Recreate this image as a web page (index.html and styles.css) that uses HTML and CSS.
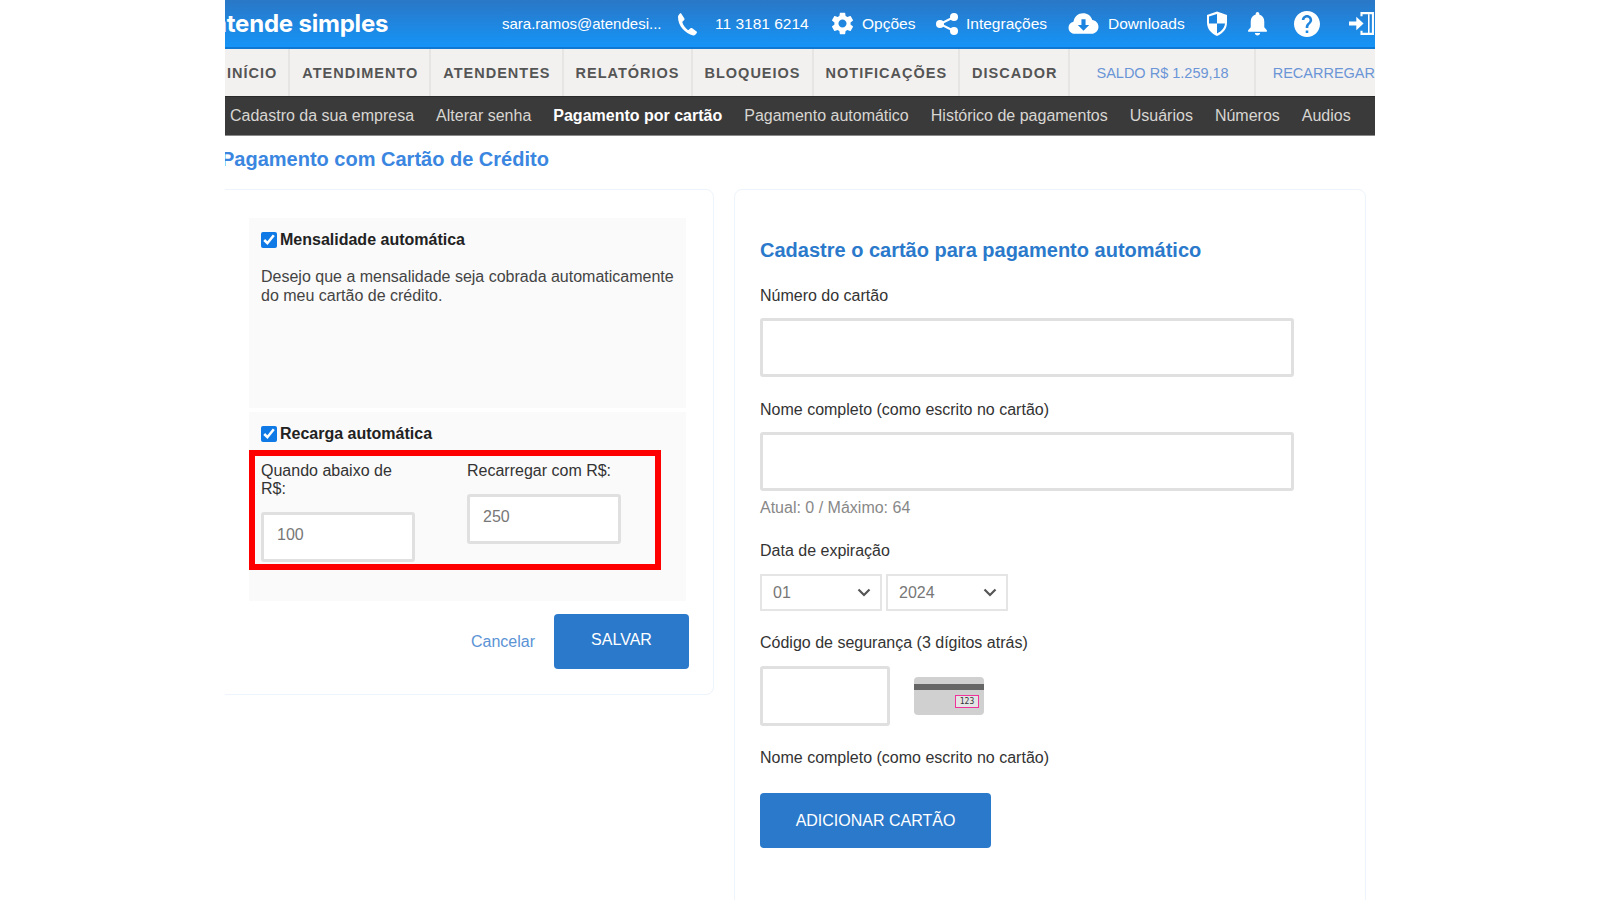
FILE: index.html
```html
<!DOCTYPE html>
<html lang="pt-BR">
<head>
	<meta charset="utf-8">
	<title>Pagamento com Cartão de Crédito</title>
	<link rel="stylesheet" href="styles.css">
</head>
<body>
<div class="page">

	<!-- top bar -->
	<header class="topbar">
		<div class="logo">atende simples</div>
		<div class="email">sara.ramos@atendesi...</div>
		<svg class="ico ico-phone" viewBox="0 0 24 24"><path d="M6.2 1.6 9.4 6.6c.3.5.2 1-.2 1.4L7.6 9.6c-.3.3-.3.7-.2 1 1 3 2.800 5.500 5.400 7.300.4.200.7.200 1-.1l1.700-1.600c.4-.4 1-.4 1.400-.1l4.700 3.500c.4.300.5.900.2 1.300l-1.300 1.600c-.6.700-1.400 1-2.300.9C10.200 21.800 2.800 13.700 3 4.800c0-.8.300-1.500.9-2l1-1.300c.4-.4 1-.4 1.300.1z"/></svg>
		<div class="phone">11 3181 6214</div>
		<svg class="ico ico-gear" viewBox="0 0 24 24"><path d="M19.14 12.94c.04-.3.06-.61.06-.94 0-.32-.02-.64-.07-.94l2.03-1.58c.18-.14.23-.41.12-.61l-1.92-3.32c-.12-.22-.37-.29-.59-.22l-2.39.96c-.5-.38-1.03-.7-1.62-.94l-.36-2.54c-.04-.24-.24-.41-.48-.41h-3.84c-.24 0-.43.17-.47.41l-.36 2.54c-.59.24-1.13.57-1.62.94l-2.39-.96c-.22-.08-.47 0-.59.22L2.74 8.87c-.12.21-.08.47.12.61l2.03 1.58c-.05.3-.09.63-.09.94s.02.64.07.94l-2.03 1.58c-.18.14-.23.41-.12.61l1.92 3.32c.12.22.37.29.59.22l2.39-.96c.5.38 1.03.7 1.62.94l.36 2.54c.05.24.24.41.48.41h3.84c.24 0 .44-.17.47-.41l.36-2.54c.59-.24 1.13-.56 1.62-.94l2.39.96c.22.08.47 0 .59-.22l1.92-3.32c.12-.22.07-.47-.12-.61l-2.01-1.58zM12 15.6c-1.98 0-3.6-1.62-3.6-3.6s1.62-3.6 3.6-3.6 3.6 1.62 3.6 3.6-1.62 3.6-3.6 3.6z"/></svg>
		<div class="top-link link-opcoes">Opções</div>
		<svg class="ico ico-share" viewBox="0 0 24 24"><path d="M19 5 5 12l14 7" fill="none" stroke="#fff" stroke-width="2"/><circle cx="19" cy="5" r="4"/><circle cx="5" cy="12" r="4"/><circle cx="19" cy="19" r="4"/></svg>
		<div class="top-link link-integ">Integrações</div>
		<svg class="ico ico-cloud" viewBox="0 0 30 22"><path d="M7 21C3 21 .5 18.200.5 15c0-3 2-5.200 4.800-5.800C6 4.200 10 1 14.500 1c4.500 0 7.800 2.600 9 6.600 3.300.3 6 3 6 6.600 0 3.800-3 6.800-6.800 6.800z"/><path d="M13 7h4v5.500h3.500L15 18l-5.500-5.500H13z" fill="#1b84e0"/></svg>
		<div class="top-link link-down">Downloads</div>
		<svg class="ico ico-shield" viewBox="0 0 22 26"><path d="M11 1 1 4.500V12c0 6.300 4.200 11 10 13.500C16.800 23 21 18.300 21 12V4.500z"/><path d="M11 3.600V13H3V12V6zM11 13h8c-.4 4.400-3.500 7.800-8 10z" fill="#1b84e0"/></svg>
		<svg class="ico ico-bell" viewBox="0 0 20 24"><path d="M10 1c-1 0-1.700.8-1.700 1.700v.6C5.300 4.200 3.500 6.800 3.500 10v5.500L1 18.500V20h18v-1.500l-2.500-3V10c0-3.200-1.800-5.800-4.800-6.700v-.6C11.700 1.800 11 1 10 1zM7.500 21.200c0 1.300 1.100 2.300 2.500 2.300s2.500-1 2.500-2.300z"/></svg>
		<svg class="ico ico-help" viewBox="2 2 20 20"><path d="M12 2C6.480 2 2 6.480 2 12s4.480 10 10 10 10-4.480 10-10S17.520 2 12 2zm1 17h-2v-2h2v2zm2.070-7.750l-.9.92C13.450 12.900 13 13.500 13 15h-2v-.5c0-1.100.45-2.100 1.170-2.830l1.240-1.260c.37-.36.59-.86.59-1.410 0-1.100-.9-2-2-2s-2 .9-2 2H8c0-2.210 1.790-4 4-4s4 1.790 4 4c0 .88-.36 1.680-.93 2.250z"/></svg>
		<svg class="ico ico-exit" viewBox="0 0 26 24"><path d="M1 10h7V5.500l7 6.500-7 6.500V14H1z"/><path d="M13 5V2h11v20H13v-3" fill="none" stroke="#fff" stroke-width="2"/><path d="M20 3v19" stroke="#fff" stroke-width="1.500"/></svg>
	</header>

	<!-- main menu -->
	<nav class="menu">
		<a class="menu-item item-first">INÍCIO</a>
		<a class="menu-item">ATENDIMENTO</a>
		<a class="menu-item">ATENDENTES</a>
		<a class="menu-item">RELATÓRIOS</a>
		<a class="menu-item">BLOQUEIOS</a>
		<a class="menu-item">NOTIFICAÇÕES</a>
		<a class="menu-item">DISCADOR</a>
		<div class="saldo">SALDO R$ 1.259,18</div>
		<div class="recarregar">RECARREGAR</div>
	</nav>

	<!-- submenu -->
	<nav class="submenu">
		<a>Cadastro da sua empresa</a>
		<a>Alterar senha</a>
		<a class="current">Pagamento por cartão</a>
		<a>Pagamento automático</a>
		<a>Histórico de pagamentos</a>
		<a>Usuários</a>
		<a>Números</a>
		<a>Audios</a>
	</nav>

	<h1 class="page-title">Pagamento com Cartão de Crédito</h1>

	<div class="columns">

		<section class="card card-left">
			<div class="box box-month">
				<label class="check-row"><input type="checkbox" checked> Mensalidade automática</label>
				<p class="box-text">Desejo que a mensalidade seja cobrada automaticamente do meu cartão de crédito.</p>
			</div>
			<div class="box box-recharge">
				<label class="check-row"><input type="checkbox" checked> Recarga automática</label>
				<div class="recharge-fields">
					<div class="recharge-col">
						<label class="field-label">Quando abaixo de R$:</label>
						<input class="text-input small-input" type="text" value="100">
					</div>
					<div class="recharge-col">
						<label class="field-label">Recarregar com R$:</label>
						<input class="text-input small-input" type="text" value="250">
					</div>
				</div>
				<div class="highlight"></div>
			</div>
			<div class="actions">
				<a class="cancel">Cancelar</a>
				<button class="btn btn-save">SALVAR</button>
			</div>
		</section>

		<section class="card card-right">
			<h2 class="card-title">Cadastre o cartão para pagamento automático</h2>

			<label class="field-label label-number">Número do cartão</label>
			<input class="text-input wide-input" type="text">

			<label class="field-label label-name">Nome completo (como escrito no cartão)</label>
			<input class="text-input wide-input" type="text">
			<div class="hint">Atual: 0 / Máximo: 64</div>

			<label class="field-label label-date">Data de expiração</label>
			<div class="selects">
				<div class="select-wrap">
					<select><option>01</option></select>
					<svg class="chevron" viewBox="0 0 14 9"><path d="M1.500 1.500 7 7l5.500-5.500" fill="none" stroke="#555" stroke-width="2.200"/></svg>
				</div>
				<div class="select-wrap">
					<select><option>2024</option></select>
					<svg class="chevron" viewBox="0 0 14 9"><path d="M1.500 1.500 7 7l5.500-5.500" fill="none" stroke="#555" stroke-width="2.200"/></svg>
				</div>
			</div>

			<label class="field-label label-code">Código de segurança (3 dígitos atrás)</label>
			<div class="code-row">
				<input class="text-input code-input" type="text">
				<div class="cvv-card">
					<div class="cvv-stripe"></div>
					<div class="cvv-num">123</div>
				</div>
			</div>

			<label class="field-label label-name2">Nome completo (como escrito no cartão)</label>
			<button class="btn btn-add">ADICIONAR CARTÃO</button>
		</section>

	</div>
</div>
</body>
</html>
```

FILE: styles.css
```css
html, body {margin: 0; background: #fff;}

body {
	font-family: "Liberation Sans", Arial, sans-serif;
	font-size: 16px;
	color: #333;
}

.page {
	width: 1150px;
	height: 900px;
	margin: 0 auto;
	overflow: hidden;
}

/* top bar */
.topbar {
	height: 49px;
	box-sizing: border-box;
	display: flex;
	align-items: center;
	color: #fff;
	background: linear-gradient(#2a77c6, #1594f7);
	border-bottom: 2px solid #0f78d2;
	font-size: 15.5px;
}
.logo {
	font-family: "Inter", "Liberation Sans", sans-serif;
	font-size: 24px;
	font-weight: 700;
	margin-left: -12px;
	width: 289px;
	white-space: nowrap;
	letter-spacing: -0.2px;
}
.email {width: 173px; font-size: 15px; white-space: nowrap;}
.phone {width: 114px; white-space: nowrap;}
.top-link {white-space: nowrap;}
.ico {fill: #fff; flex: none; display: block;}
.ico-phone {width: 24px; height: 24px; margin-right: 16px;}
.ico-gear {width: 27px; height: 27px; margin-right: 6px;}
.link-opcoes {width: 73px;}
.ico-share {width: 24px; height: 24px; margin-right: 7px;}
.link-integ {width: 102px;}
.ico-cloud {width: 31px; height: 23px; margin-right: 9px;}
.link-down {width: 98px;}
.ico-shield {width: 22px; height: 27px; margin-right: 19px;}
.ico-bell {width: 21px; height: 25px; margin-right: 26px;}
.ico-help {width: 26px; height: 26px; margin-right: 28px;}
.ico-exit {width: 27px; height: 25px;}

/* main menu */
.menu {
	height: 47px;
	display: flex;
	align-items: center;
	background: #f2f1f0;
	font-size: 14.5px;
}
.menu-item {
	height: 100%;
	display: flex;
	align-items: center;
	padding: 0 11px 0 12px;
	border-right: 2px solid #e6e5e4;
	font-weight: 700;
	letter-spacing: 1px;
	color: #555;
}
.item-first {padding-left: 2px;}
.saldo {
	width: 215px;
	box-sizing: border-box;
	height: 100%;
	display: flex;
	align-items: center;
	justify-content: flex-end;
	padding-right: 25px;
	border-right: 2px solid #e6e5e4;
	color: #6b95d6;
	font-size: 14.500px;
}
.recarregar {
	margin-left: 17px;
	color: #6b95d6;
	font-size: 14.500px;
}

/* submenu */
.submenu {
	height: 40px;
	box-sizing: border-box;
	display: flex;
	align-items: center;
	gap: 22px;
	padding-left: 5px;
	background: #3a3a3a;
	border-bottom: 1px solid #8a8a8a;
	border-top: 1px solid #2a2a2a;
	color: #d8d6d2;
}
.submenu .current {color: #fff; font-weight: 700;}

.page-title {
	margin: 0;
	padding: 12px 0 0 0;
	height: 53px;
	box-sizing: border-box;
	margin-left: -4px;
	font-size: 20px;
	line-height: 22px;
	font-weight: 700;
	color: #3a86e0;
}

/* cards */
.columns {display: flex; gap: 20px; align-items: flex-start;}
.card {
	background: #fff;
	border: 1px solid #edf4fb;
	border-radius: 8px;
	box-sizing: border-box;
}
.card-left {
	width: 510px;
	margin-left: -21px;
	height: 506px;
	padding: 28px 0 0 44px;
}
.card-right {
	width: 632px;
	height: 760px;
	padding: 48px 0 0 25px;
}

.box {
	width: 437px;
	box-sizing: border-box;
	background: #fafafa;
	padding: 12px 12px 0 12px;
	position: relative;
}
.box-month {height: 190px; margin-bottom: 4px;}
.box-recharge {height: 189px;}

.check-row {
	display: flex;
	align-items: center;
	gap: 3px;
	font-weight: 700;
	color: #222;
	height: 20px;
}
.check-row input {
	width: 16px;
	height: 16px;
	margin: 0;
	accent-color: #0f7ae5;
}
.box-text {
	margin: 18px 0 0 0;
	font-size: 16px;
	line-height: 18.500px;
	color: #444;
}

.field-label {display: block; color: #333; font-size: 16px; line-height: 18px;}
.recharge-fields {display: flex; margin-top: 18px; gap: 52px;}
.recharge-col {width: 154px;}
.text-input {
	display: block;
	box-sizing: border-box;
	background: #fff;
	border: 3px solid #e0e0e0;
	border-radius: 3px;
	outline: none;
	font-family: inherit;
	color: #777;
	font-size: 16px;
}
.small-input {width: 154px; height: 50px; margin-top: 14px; padding: 0 0 4px 13px;}

/* red box marking the recharge fields, lies over the box */
.highlight {
	position: absolute;
	left: 0;
	top: 38px;
	width: 412px;
	height: 120px;
	box-sizing: border-box;
	border: 6px solid #f00;
}

.actions {
	display: flex;
	justify-content: flex-end;
	align-items: center;
	width: 440px;
	gap: 19px;
	margin-top: 13px;
}
.cancel {color: #5b93d5;}

.btn {
	border: none;
	border-radius: 4px;
	background: #2a79cb;
	color: #fff;
	font-family: inherit;
	font-size: 16px;
}
.btn-save {width: 135px; height: 55px; padding: 0 0 4px 0;}
.btn-add {display: block; width: 231px; height: 55px; margin-top: 26px;}

.card-title {
	margin: 0;
	font-size: 20px;
	line-height: 24px;
	font-weight: 700;
	color: #2a79cb;
}
.label-number {margin-top: 25px;}
.wide-input {width: 534px; height: 59px; margin-top: 13px;}
.label-name {margin-top: 24px;}
.hint {margin-top: 8px; color: #888; line-height: 18px;}
.label-date {margin-top: 25px;}

.selects {display: flex; gap: 4px; margin-top: 14px;}
.select-wrap {position: relative;}
.select-wrap select {
	display: block;
	width: 122px;
	height: 37px;
	box-sizing: border-box;
	appearance: none;
	background: #fff;
	border: 2px solid #e5e5e5;
	border-radius: 0;
	padding-left: 11px;
	font-family: inherit;
	font-size: 16px;
	color: #777;
}
.chevron {
	position: absolute;
	right: 11px;
	top: 14px;
	width: 14px;
	height: 9px;
}

.label-code {margin-top: 23px;}
.code-row {display: flex; align-items: center; gap: 24px; margin-top: 14px;}
.code-input {width: 130px; height: 60px;}
.cvv-card {
	width: 70px;
	height: 38px;
	background: #d0d0d0;
	border-radius: 4px;
	padding-top: 7px;
	box-sizing: border-box;
	display: flex;
	flex-direction: column;
	align-items: flex-end;
}
.cvv-stripe {width: 100%; height: 6px; background: #666; flex: none;}
.cvv-num {
	margin: 5px 5px 0 0;
	width: 24px;
	height: 13px;
	box-sizing: border-box;
	border: 1px solid #f0329b;
	background: #e4e4e4;
	font-family: "DejaVu Sans Mono", monospace;
	font-size: 8px;
	line-height: 11px;
	text-align: center;
	color: #333;
}
.label-name2 {margin-top: 23px;}
```
